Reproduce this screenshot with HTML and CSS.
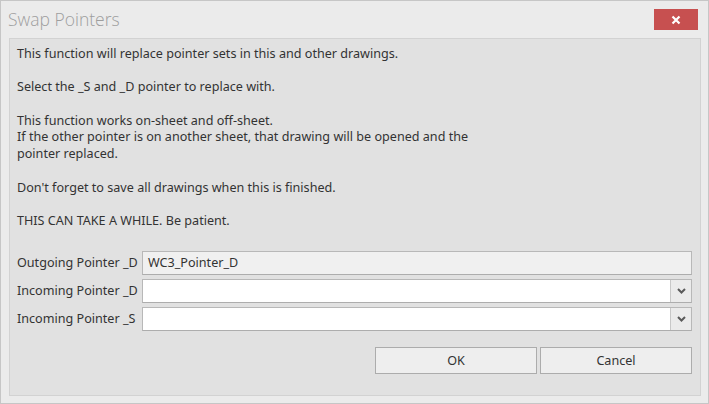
FILE: index.html
```html
<!DOCTYPE html>
<html lang="en">
<head>
<meta charset="UTF-8" />
<title>Swap Pointers</title>
<link rel="stylesheet" href="styles.css">
</head>
<body>
  <div class="window">
    <div class="titlebar">
      <span class="title">Swap Pointers</span>
      <button class="close" aria-label="Close">
        <svg width="10" height="10" viewBox="0 0 10 10"><path d="M1.5 1.5 L8.5 8.5 M8.5 1.5 L1.5 8.5" stroke="#fff" stroke-width="2.2" /></svg>
      </button>
    </div>

    <div class="panel">
      <div class="message">
        <p>This function will replace pointer sets in this and other drawings.</p>
        <p>Select the _S and _D pointer to replace with.</p>
        <p>This function works on-sheet and off-sheet.<br>If the other pointer is on another sheet, that drawing will be opened and the<br>pointer replaced.</p>
        <p>Don't forget to save all drawings when this is finished.</p>
        <p>THIS CAN TAKE A WHILE. Be patient.</p>
      </div>

      <div class="form">
        <label>Outgoing Pointer _D</label>
        <div class="field readonly">WC3_Pointer_D</div>

        <label>Incoming Pointer _D</label>
        <div class="field combo">
          <span class="value"></span>
          <span class="arrow"><svg width="9" height="6" viewBox="0 0 9 6"><path d="M1 1 L4.5 4.5 L8 1" fill="none" stroke="#5a5a5a" stroke-width="2" /></svg></span>
        </div>

        <label>Incoming Pointer _S</label>
        <div class="field combo">
          <span class="value"></span>
          <span class="arrow"><svg width="9" height="6" viewBox="0 0 9 6"><path d="M1 1 L4.5 4.5 L8 1" fill="none" stroke="#5a5a5a" stroke-width="2" /></svg></span>
        </div>
      </div>

      <div class="buttons">
        <button class="btn">OK</button>
        <button class="btn">Cancel</button>
      </div>
    </div>
  </div>
</body>
</html>
```

FILE: styles.css
```css
* {
  box-sizing: border-box;
}
html, body {
  margin: 0;
  padding: 0;
  width: 709px;
  height: 404px;
  overflow: hidden;
}
body {
  font-family: "Noto Sans", "Open Sans", sans-serif;
  font-size: 12.6px;
  color: #333333;
  background: #ebebeb;
}
.window {
  width: 709px;
  height: 404px;
  border: 1px solid #c6c6c6;
  background: #ebebeb;
  display: flex;
  flex-direction: column;
  padding: 0 7px 7px 8px;
}
/* Barra de título */
.titlebar {
  height: 37px;
  display: flex;
  align-items: flex-start;
  justify-content: space-between;
}
.title {
  font-family: "Open Sans", "Noto Sans", sans-serif;
  font-weight: 300;
  font-size: 17.5px;
  color: #9e9e9e;
  margin-top: 6px;
  margin-left: -1px;
}
.close {
  margin-top: 8px;
  margin-right: 3px;
  width: 44px;
  height: 21px;
  border: none;
  padding: 0;
  background: #c75050;
  display: flex;
  align-items: center;
  justify-content: center;
}
/* Painel interno */
.panel {
  flex: 1;
  background: #e1e1e1;
  border: 1px solid #d2d2d2;
  padding: 7px 8px 0 7px;
  display: flex;
  flex-direction: column;
}
.message p {
  margin: 0 0 16.7px;
  line-height: 16.7px;
}
.message p:last-child {
  margin-bottom: 0;
}
.form {
  margin-top: 21px;
  display: grid;
  grid-template-columns: 125px 1fr;
  row-gap: 4px;
  align-items: center;
}
.form label {
  white-space: nowrap;
}
.field {
  height: 24px;
  border: 1px solid #b8b8b8;
  border-bottom-color: #adadad;
  background: #fff;
  padding: 0 5px;
  line-height: 22px;
  display: flex;
}
.readonly {
  background: #f0f0f0;
}
.combo {
  padding: 0;
}
.combo .value {
  flex: 1;
}
.combo .arrow {
  width: 21px;
  border-left: 1px solid #c8c8c8;
  background: #ebebeb;
  display: flex;
  align-items: center;
  justify-content: center;
}
.buttons {
  margin-top: 16px;
  display: flex;
  justify-content: flex-end;
  gap: 3px;
}
.btn {
  height: 27px;
  border: 1px solid #acacac;
  background: #eeeeee;
  font-family: inherit;
  font-size: 12.6px;
  color: #333333;
  padding: 0;
}
.btn:first-child {
  width: 162px;
}
.btn:last-child {
  width: 152px;
}
```
